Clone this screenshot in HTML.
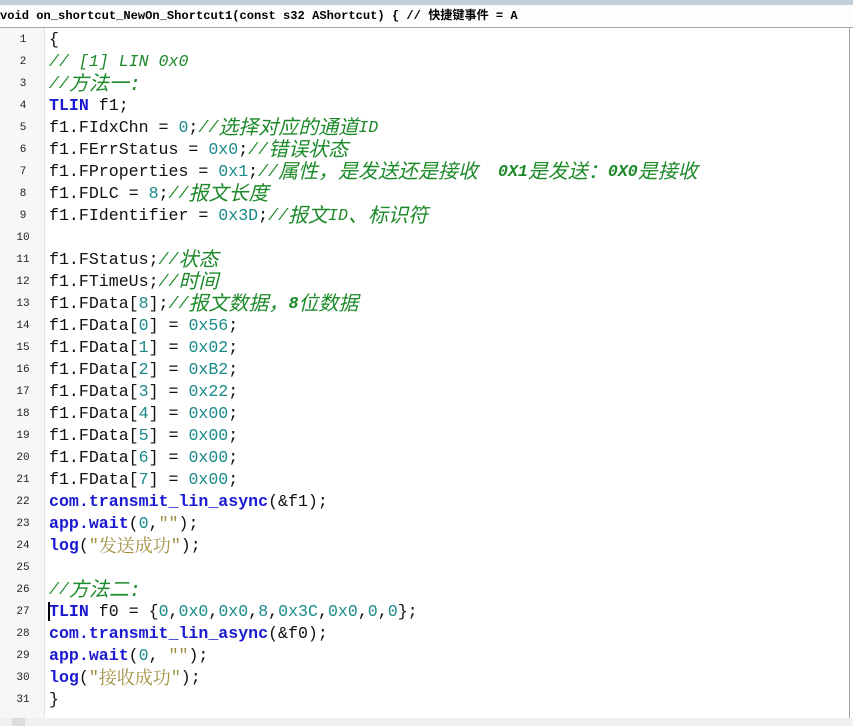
<!DOCTYPE html>
<html><head><meta charset="utf-8"><style>
html,body{margin:0;padding:0;width:853px;height:726px;overflow:hidden;background:#fff;}
.top{position:absolute;left:0;top:0;width:853px;height:5px;background:#c3ced6;}
.hdr{position:absolute;left:0;top:5px;width:853px;height:22px;background:#fdfdfd;border-bottom:1px solid #a8a8a8;font:bold 12.1px "Liberation Mono","Noto Sans CJK SC",monospace;line-height:23px;color:#000;white-space:pre;}
.gut{position:absolute;left:0;top:28px;width:44px;height:690px;background:#f7f7f7;border-right:1px solid #e2e2e2;}
.rb{position:absolute;left:849px;top:28px;width:1px;height:690px;background:#a0a0a0;}
.ln{position:absolute;left:0;width:46px;text-align:center;font:11px "Liberation Mono",monospace;color:#222;}
.cl{position:absolute;left:49px;font:16.6px "Liberation Mono","Noto Sans CJK SC",monospace;color:#111;white-space:pre;line-height:22px;height:22px;}
.c{color:#1d8a2a;font-style:italic;}
.z{font-size:20px;line-height:0;font-weight:normal;position:relative;top:2px;}
.k{color:#1a1ad0;font-weight:bold;}
.n{color:#1a8a8a;}
.s{color:#a09040;}
.s .z{font-family:"Noto Serif CJK SC",serif;font-size:18px;}
.sb{position:absolute;left:0;top:718px;width:853px;height:8px;background:#f0f0f0;}
.th{position:absolute;left:12px;top:718px;width:13px;height:8px;background:#dcdcdc;}
.cur{position:absolute;left:48px;top:602px;width:2px;height:19px;background:#000;}
</style></head><body>
<div class="top"></div>
<div class="hdr">void on_shortcut_NewOn_Shortcut1(const s32 AShortcut) { // 快捷键事件 = A</div>
<div class="gut"></div>
<div class="rb"></div>
<div class="ln" style="top:34px">1</div><div class="cl" style="top:29px">{</div>
<div class="ln" style="top:56px">2</div><div class="cl" style="top:51px"><span class="c">// [1] LIN 0x0</span></div>
<div class="ln" style="top:78px">3</div><div class="cl" style="top:73px"><span class="c">//<span class="z">方法一:</span></span></div>
<div class="ln" style="top:100px">4</div><div class="cl" style="top:95px"><span class="k">TLIN</span> f1;</div>
<div class="ln" style="top:122px">5</div><div class="cl" style="top:117px">f1.FIdxChn = <span class="n">0</span>;<span class="c">//<span class="z">选择对应的通道</span>ID</span></div>
<div class="ln" style="top:144px">6</div><div class="cl" style="top:139px">f1.FErrStatus = <span class="n">0x0</span>;<span class="c">//<span class="z">错误状态</span></span></div>
<div class="ln" style="top:166px">7</div><div class="cl" style="top:161px">f1.FProperties = <span class="n">0x1</span>;<span class="c">//<span class="z">属性，是发送还是接收</span>  <b>0X1</b><span class="z">是发送：</span><b>0X0</b><span class="z">是接收</span></span></div>
<div class="ln" style="top:188px">8</div><div class="cl" style="top:183px">f1.FDLC = <span class="n">8</span>;<span class="c">//<span class="z">报文长度</span></span></div>
<div class="ln" style="top:210px">9</div><div class="cl" style="top:205px">f1.FIdentifier = <span class="n">0x3D</span>;<span class="c">//<span class="z">报文</span>ID<span class="z">、标识符</span></span></div>
<div class="ln" style="top:232px">10</div>
<div class="ln" style="top:254px">11</div><div class="cl" style="top:249px">f1.FStatus;<span class="c">//<span class="z">状态</span></span></div>
<div class="ln" style="top:276px">12</div><div class="cl" style="top:271px">f1.FTimeUs;<span class="c">//<span class="z">时间</span></span></div>
<div class="ln" style="top:298px">13</div><div class="cl" style="top:293px">f1.FData[<span class="n">8</span>];<span class="c">//<span class="z">报文数据，</span><b>8</b><span class="z">位数据</span></span></div>
<div class="ln" style="top:320px">14</div><div class="cl" style="top:315px">f1.FData[<span class="n">0</span>] = <span class="n">0x56</span>;</div>
<div class="ln" style="top:342px">15</div><div class="cl" style="top:337px">f1.FData[<span class="n">1</span>] = <span class="n">0x02</span>;</div>
<div class="ln" style="top:364px">16</div><div class="cl" style="top:359px">f1.FData[<span class="n">2</span>] = <span class="n">0xB2</span>;</div>
<div class="ln" style="top:386px">17</div><div class="cl" style="top:381px">f1.FData[<span class="n">3</span>] = <span class="n">0x22</span>;</div>
<div class="ln" style="top:408px">18</div><div class="cl" style="top:403px">f1.FData[<span class="n">4</span>] = <span class="n">0x00</span>;</div>
<div class="ln" style="top:430px">19</div><div class="cl" style="top:425px">f1.FData[<span class="n">5</span>] = <span class="n">0x00</span>;</div>
<div class="ln" style="top:452px">20</div><div class="cl" style="top:447px">f1.FData[<span class="n">6</span>] = <span class="n">0x00</span>;</div>
<div class="ln" style="top:474px">21</div><div class="cl" style="top:469px">f1.FData[<span class="n">7</span>] = <span class="n">0x00</span>;</div>
<div class="ln" style="top:496px">22</div><div class="cl" style="top:491px"><span class="k">com.transmit_lin_async</span>(&amp;f1);</div>
<div class="ln" style="top:518px">23</div><div class="cl" style="top:513px"><span class="k">app.wait</span>(<span class="n">0</span>,<span class="s">""</span>);</div>
<div class="ln" style="top:540px">24</div><div class="cl" style="top:535px"><span class="k">log</span>(<span class="s">"<span class="z">发送成功</span>"</span>);</div>
<div class="ln" style="top:562px">25</div>
<div class="ln" style="top:584px">26</div><div class="cl" style="top:579px"><span class="c">//<span class="z">方法二:</span></span></div>
<div class="ln" style="top:606px">27</div><div class="cl" style="top:601px"><span class="k">TLIN</span> f0 = {<span class="n">0</span>,<span class="n">0x0</span>,<span class="n">0x0</span>,<span class="n">8</span>,<span class="n">0x3C</span>,<span class="n">0x0</span>,<span class="n">0</span>,<span class="n">0</span>};</div>
<div class="ln" style="top:628px">28</div><div class="cl" style="top:623px"><span class="k">com.transmit_lin_async</span>(&amp;f0);</div>
<div class="ln" style="top:650px">29</div><div class="cl" style="top:645px"><span class="k">app.wait</span>(<span class="n">0</span>, <span class="s">""</span>);</div>
<div class="ln" style="top:672px">30</div><div class="cl" style="top:667px"><span class="k">log</span>(<span class="s">"<span class="z">接收成功</span>"</span>);</div>
<div class="ln" style="top:694px">31</div><div class="cl" style="top:689px">}</div>
<div class="cur"></div>
<div class="sb"></div><div class="th"></div>
</body></html>
